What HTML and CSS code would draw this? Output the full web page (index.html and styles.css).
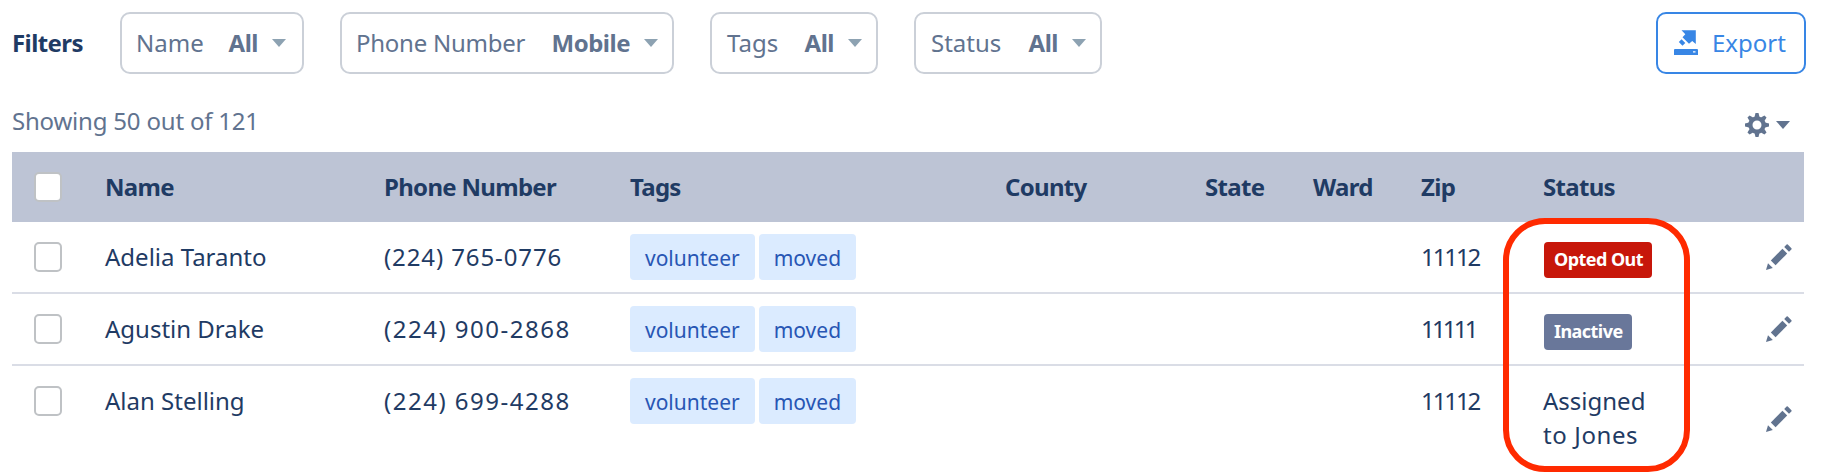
FILE: index.html
```
<!DOCTYPE html>
<html lang="en">
<head>
  <meta charset="UTF-8"/>
  <meta name="viewport" content="width=device-width, initial-scale=1.0"/>
  <title>People</title>
  <link rel="stylesheet" href="styles.css">
</head>
<body>
  <svg class="sprite">
    <symbol id="pencil" viewBox="0 0 26 26">
      <path d="M0 26 L2 19.2 L6.8 24 Z"/>
      <path d="M4.8 16.4 L16.4 4.8 L21.2 9.6 L9.6 21.2 Z"/>
      <path d="M18.2 3 L20.6 0.6 Q21.2 0 21.8 0.6 L25.4 4.2 Q26 4.8 25.4 5.4 L23 7.8 Z"/>
    </symbol>
  </svg>

  <div class="toolbar">
    <h2>Filters</h2>
    <button class="filter filter-name"><span>Name</span><b>All</b><i class="caret"></i></button>
    <button class="filter filter-phone"><span>Phone Number</span><b>Mobile</b><i class="caret"></i></button>
    <button class="filter filter-tags"><span>Tags</span><b>All</b><i class="caret"></i></button>
    <button class="filter filter-status"><span>Status</span><b>All</b><i class="caret"></i></button>
    <button class="export">
      <svg width="24" height="26" viewBox="0 0 24 26">
        <path d="M7.500 0.200 H21.800 V14 L18.200 11 L15 13.800 L8.500 7.300 L11.300 4.200 Z"/>
        <path d="M7.600 9.300 L11.300 13 L8.500 15.800 L4.800 12.100 Z"/>
        <path fill-rule="evenodd" d="M1 19 H23 Q24 19 24 20 V25 H0 V20 Q0 19 1 19 Z M19 21.200 V22.400 H21.500 V21.200 Z"/>
      </svg>
      <span>Export</span>
    </button>
  </div>

  <div class="summary">
    <p>Showing 50 out of 121</p>
    <div class="settings">
      <svg width="24" height="24" viewBox="-12 -12 24 24">
        <circle r="6.600" fill="none" stroke="#61738f" stroke-width="4.200"/>
        <g id="teeth">
          <path d="M-2.500 -8 L-1.500 -12 H1.500 L2.500 -8 Z M-2.500 8 L-1.500 12 H1.500 L2.500 8 Z M-8 -2.500 L-12 -1.500 V1.500 L-8 2.500 Z M8 -2.500 L12 -1.500 V1.500 L8 2.500 Z"/>
        </g>
        <use href="#teeth" transform="rotate(45)"/>
      </svg>
      <i class="caret"></i>
    </div>
  </div>

  <div class="table-wrap">
    <table>
      <colgroup>
        <col class="c-check"><col class="c-name"><col class="c-phone"><col class="c-tags"><col class="c-county">
        <col class="c-state"><col class="c-ward"><col class="c-zip"><col class="c-status"><col class="c-edit">
      </colgroup>
      <thead>
        <tr>
          <th><input type="checkbox"></th>
          <th>Name</th>
          <th>Phone Number</th>
          <th>Tags</th>
          <th>County</th>
          <th>State</th>
          <th>Ward</th>
          <th>Zip</th>
          <th>Status</th>
          <th></th>
        </tr>
      </thead>
      <tbody>
        <tr>
          <td><input type="checkbox"></td>
          <td>Adelia Taranto</td>
          <td class="phone snug">(224) 765-0776</td>
          <td><div class="tags"><span>volunteer</span><span>moved</span></div></td>
          <td></td><td></td><td></td>
          <td class="zip">11112</td>
          <td><span class="badge opted-out">Opted Out</span></td>
          <td class="edit"><svg><use href="#pencil"/></svg></td>
        </tr>
        <tr>
          <td><input type="checkbox"></td>
          <td>Agustin Drake</td>
          <td class="phone">(224) 900-2868</td>
          <td><div class="tags"><span>volunteer</span><span>moved</span></div></td>
          <td></td><td></td><td></td>
          <td class="zip snug">11111</td>
          <td><span class="badge inactive">Inactive</span></td>
          <td class="edit"><svg><use href="#pencil"/></svg></td>
        </tr>
        <tr>
          <td><input type="checkbox"></td>
          <td>Alan Stelling</td>
          <td class="phone">(224) 699-4288</td>
          <td><div class="tags"><span>volunteer</span><span>moved</span></div></td>
          <td></td><td></td><td></td>
          <td class="zip">11112</td>
          <td>Assigned<br><span class="assignee">to Jones</span></td>
          <td class="edit"><svg><use href="#pencil"/></svg></td>
        </tr>
      </tbody>
    </table>
    <div class="highlight"></div>
  </div>
</body>
</html>
```
FILE: styles.css
```
* { box-sizing: border-box; margin: 0; padding: 0; }

body {
  height: 472px;
  padding: 12px 22px 0 12px;
  overflow: hidden;
  background: #fff;
  color: #1f3b64;
  font-family: "Noto Sans", sans-serif;
  font-size: 24px;
  line-height: 34px;
}

.sprite { display: none; }

.toolbar {
  display: flex;
  align-items: center;
  height: 62px;
  width: 1794px;
}

.toolbar h2 {
  width: 108px;
  font-size: 24px;
  font-weight: 700;
  letter-spacing: -0.6px;
}

button {
  display: flex;
  align-items: center;
  height: 62px;
  border: 2px solid #cbd0d8;
  border-radius: 10px;
  background: #fff;
  color: #61738f;
  font: inherit;
  white-space: nowrap;
}

.filter {
  margin-right: 36px;
  padding: 0 14px;
}

.filter b {
  margin-left: auto;
  letter-spacing: -0.5px;
}

.filter-name { width: 184px; padding-right: 16px; }
.filter-phone { width: 334px; }
.filter-phone span { letter-spacing: -0.25px; }
.filter-tags { width: 168px; padding-left: 15px; }
.filter-status { width: 188px; padding-left: 15px; }

.caret {
  margin-left: 14px;
  border: 7px solid transparent;
  border-top: 8px solid #8da2b2;
  border-bottom: 0;
}

.export {
  width: 150px;
  margin-left: auto;
  padding: 0 16px;
  border-color: #3886e5;
  color: #3886e5;
}

.export svg {
  flex-shrink: 0;
  margin-right: 14px;
  fill: #3886e5;
}

.summary {
  display: flex;
  justify-content: space-between;
  height: 78px;
  padding-top: 30px;
  color: #61738f;
  letter-spacing: -0.2px;
}

.settings {
  display: flex;
  align-items: center;
  height: 42px;
  margin-right: 14px;
}

.settings svg { fill: #61738f; }
.settings .caret { margin-left: 7px; border-top-color: #61738f; }

.table-wrap { position: relative; }

table {
  width: 1792px;
  table-layout: fixed;
  border-collapse: separate;
  border-spacing: 0;
}

.c-check { width: 93px; }
.c-name { width: 279px; }
.c-phone { width: 246px; }
.c-tags { width: 375px; }
.c-county { width: 200px; }
.c-state { width: 108px; }
.c-ward { width: 108px; }
.c-zip { width: 122px; }
.c-status { width: 180px; }

th {
  height: 70px;
  background: #bdc4d5;
  text-align: left;
  font-weight: 700;
  letter-spacing: -0.7px;
}

td {
  height: 72px;
  padding-top: 18px;
  border-bottom: 2px solid #dadde6;
  vertical-align: top;
}

tbody tr:last-child td { height: 106px; border: 0; }

input {
  display: block;
  appearance: none;
  width: 28px;
  height: 30px;
  margin-left: 22px;
  border: 2px solid #bfc2c5;
  border-radius: 5px;
  background: #fff;
}

td input { margin-top: 2px; }

.phone { letter-spacing: 1.5px; }
.phone.snug { letter-spacing: 0.9px; }
.zip { letter-spacing: -2.1px; }
.zip.snug { letter-spacing: -2.8px; }
.assignee { letter-spacing: 0.6px; }

.tags {
  display: flex;
  gap: 4px;
  margin-top: -6px;
}

.tags span {
  height: 46px;
  padding: 0 15px;
  border-radius: 4px;
  background: #dbebff;
  color: #2856b4;
  font-size: 21px;
  line-height: 48px;
}

.badge {
  display: block;
  width: max-content;
  height: 36px;
  margin: 2px 0 0 1px;
  padding: 0 9px 0 10px;
  border-radius: 4px;
  color: #fff;
  font-size: 18px;
  font-weight: 700;
  line-height: 35px;
  letter-spacing: -0.55px;
}

.opted-out { background: #c7170a; }
.inactive { background: #69779a; }

td.edit { padding: 0; vertical-align: middle; }

.edit svg {
  display: block;
  width: 26px;
  height: 26px;
  margin-left: 43px;
  fill: #61738f;
}

/* outline drawn over the status column */
.highlight {
  position: absolute;
  left: 1491px;
  top: 66px;
  width: 187px;
  height: 254px;
  border: 6px solid #ff2a00;
  border-radius: 42px;
}
```
